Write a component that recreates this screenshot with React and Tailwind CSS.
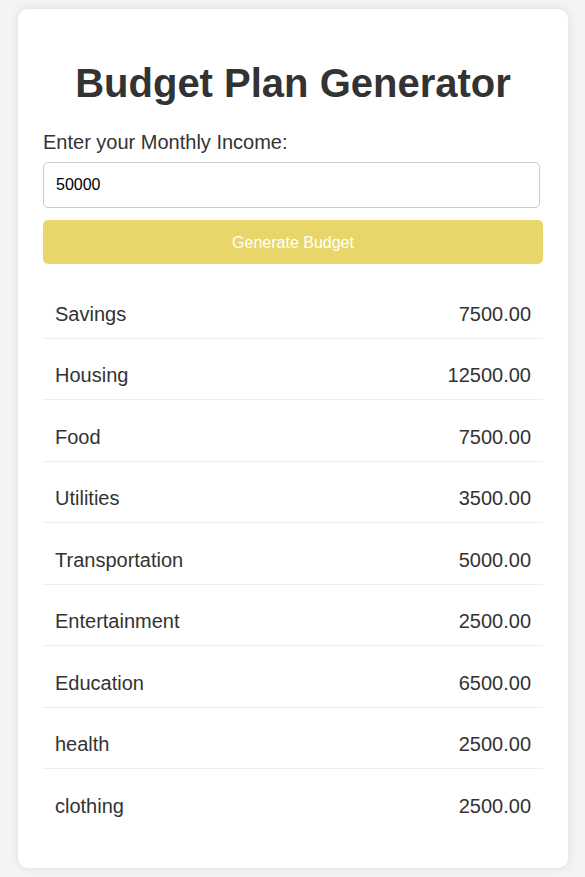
import { useState } from 'react';

const PLAN = [
  ['Savings', 0.15],
  ['Housing', 0.25],
  ['Food', 0.15],
  ['Utilities', 0.07],
  ['Transportation', 0.1],
  ['Entertainment', 0.05],
  ['Education', 0.13],
  ['health', 0.05],
  ['clothing', 0.05],
];

export default function App() {
  const [income, setIncome] = useState('50000');
  const [rows, setRows] = useState(() =>
    PLAN.map(([name, pct]) => ({ name, amount: 50000 * pct }))
  );

  const handleGenerate = () => {
    const value = parseFloat(income);
    if (isNaN(value)) return;
    setRows(PLAN.map(([name, pct]) => ({ name, amount: value * pct })));
  };

  return (
    <div className="min-h-[877px] bg-[#f4f4f4] pt-[9px] pl-[18px] font-['Liberation_Sans',Arial,sans-serif] text-[#333]">
      <div className="w-[550px] rounded-[10px] bg-white px-[25px] pt-[51px] pb-[38px] shadow-[0_0_10px_rgba(0,0,0,0.1)]">
        <h1 className="text-center text-[40px] font-bold leading-[46px]">Budget Plan Generator</h1>

        <label htmlFor="income" className="mt-[25px] block text-[20px] leading-[23px]">
          Enter your Monthly Income:
        </label>
        <input
          id="income"
          type="text"
          value={income}
          onChange={(e) => setIncome(e.target.value)}
          className="mt-[8px] block h-[46px] w-[497px] rounded-[5px] border border-[#ccc] px-[12px] text-[16px] text-black outline-none"
        />

        <button
          onClick={handleGenerate}
          className="mt-[12px] block h-[44px] w-full rounded-[5px] bg-[#e8d66a] pt-[2px] text-[16px] text-white"
        >
          Generate Budget
        </button>

        <ul className="mt-[13px]">
          {rows.map((row, i) => (
            <li
              key={row.name}
              className={`flex justify-between px-[12px] pt-[25.5px] pb-[12px] text-[20px] leading-[23px] ${
                i === rows.length - 1 ? '' : 'border-b border-[#eee]'
              }`}
            >
              <span>{row.name}</span>
              <span>{row.amount.toFixed(2)}</span>
            </li>
          ))}
        </ul>
      </div>
    </div>
  );
}
